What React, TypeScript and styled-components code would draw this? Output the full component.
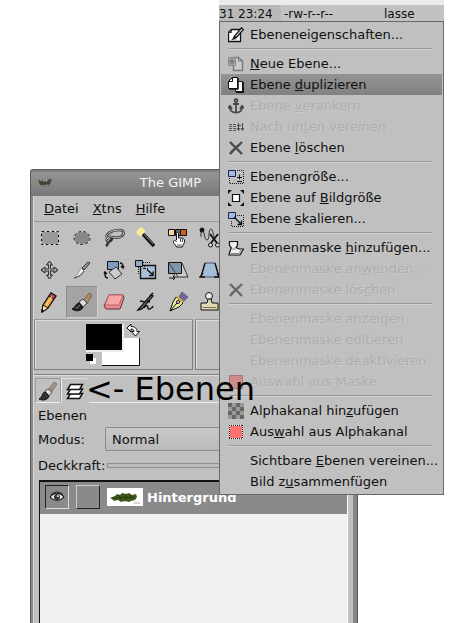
import React from "react";
import styled, { createGlobalStyle, css } from "styled-components";

const Global = createGlobalStyle`
  * { box-sizing: border-box; }
  html, body { margin: 0; background: #fff; }
  body, button, select, input {
    font-family: "DejaVu Sans", "Bitstream Vera Sans", sans-serif;
    font-size: 13px;
    color: #101010;
  }
  button { padding: 0; border: 0; background: none; text-align: left; }
  svg { display: block; flex: none; }
`;

const Desktop = styled.main`
  position: relative;
  display: flex;
  min-height: 100vh;
  overflow: hidden;
  padding: 169px 107px 0 30px;
`;

/* ---------- toolbox window ---------- */

const Window = styled.section`
  flex: 1;
  min-width: 0;
  display: flex;
  flex-direction: column;
  background: #c0c0c0;
  border: solid #5a5a5a;
  border-width: 1px 1px 0;
  border-radius: 3px 3px 0 0;
  box-shadow: inset 3px 0 #8a8a8a, inset -4px 0 #858585;
`;

const TitleBar = styled.header`
  display: flex;
  align-items: center;
  height: 26px;
  padding: 0 68px 0 7px;
  background: linear-gradient(#777 0, #949494 3px, #858585 60%, #777);
  color: #f4f4f4;
`;

const Title = styled.h1`
  flex: 1;
  margin: 0;
  text-align: center;
  font-size: 13px;
  font-weight: normal;
  line-height: 28px;
`;

const WindowBody = styled.div`
  flex: 1;
  display: flex;
  flex-direction: column;
  margin: 0 4px 0 2px;
  border-left: 1px solid #d8d8d8;
`;

const MenuBar = styled.nav`
  display: flex;
  gap: 14px;
  height: 26px;
  padding-left: 10px;
  align-items: center;
  border-bottom: 1px solid #999;
`;

const MenuTitle = styled.button`
  line-height: 24px;
`;

const ToolSet = styled.div`
  display: grid;
  grid-template-columns: repeat(6, 32px);
  grid-auto-rows: 32px;
  padding-bottom: 1px;
`;

const ToolButton = styled.button<{ $active?: boolean }>`
  display: grid;
  place-items: center;
  height: 32px;
  border: 1px solid transparent;
  ${(p) =>
    p.$active &&
    css`
      border-color: #8a8a8a #d0d0d0 #d0d0d0 #8a8a8a;
      background: #a4a4a4;
    `}
`;

const ColorRow = styled.div`
  display: grid;
  grid-template-columns: 1fr 1fr;
  height: 51px;
  gap: 2px;
`;

const ColorFrame = styled.div`
  display: grid;
  place-items: center;
  border: 1px solid #808080;
  border-top-color: #999;
  box-shadow: inset 1px 1px #dcdcdc;
`;

const Dock = styled.section`
  flex: 1;
  display: flex;
  flex-direction: column;
  margin-top: 4px;
  border-top: 1px solid #808080;
  box-shadow: inset 0 1px #dcdcdc;
`;

const Tabs = styled.div`
  display: flex;
  height: 28px;
  padding: 3px 0 0 1px;
  &::after {
    content: "";
    flex: 1;
    border-bottom: 1px solid #eee;
  }
`;

const Tab = styled.button<{ $active?: boolean }>`
  display: grid;
  place-items: center;
  width: 26px;
  border: 1px solid #999;
  border-bottom-color: #eee;
  ${(p) =>
    p.$active &&
    css`
      width: 28px;
      border-color: #ddd transparent transparent #eee;
    `}
`;

const Panel = styled.div`
  flex: 1;
  display: flex;
  flex-direction: column;
  padding: 2px 0 0 4px;
`;

const PanelTitle = styled.h2`
  margin: 0;
  font-size: 13px;
  font-weight: normal;
  line-height: 22px;
`;

const Field = styled.div`
  display: flex;
  align-items: center;
  height: 24px;
  margin-right: 6px;
`;

const ModeLabel = styled.label`
  width: 67px;
`;

const OpacityField = styled(Field)`
  height: 29px;
`;

const OpacityLabel = styled.label`
  width: 69px;
`;

const Select = styled.select`
  flex: 1;
  appearance: none;
  height: 24px;
  padding: 0 6px;
  border: 1px solid #8c8c8c;
  border-radius: 1px;
  background: linear-gradient(#c8c8c8, #bababa);
`;

const Range = styled.input`
  flex: 1;
  min-width: 0;
  appearance: none;
  height: 5px;
  margin: 0;
  border: 1px solid #909090;
  background: #bcbcbc;
  &::-webkit-slider-thumb {
    appearance: none;
    width: 20px;
    height: 11px;
    border: 1px solid #808080;
    background: #c8c8c8;
  }
`;

const LayerList = styled.ul`
  flex: 1;
  margin: 0 5px 0 1px;
  padding: 0;
  list-style: none;
  background: #f0f0f0;
  border: solid #111;
  border-width: 2px 0 0 1px;
  border-right: 1px solid #fff;
`;

const LayerRow = styled.li`
  display: flex;
  align-items: center;
  height: 32px;
  padding: 0 0 2px 5px;
  background: #8a8a8a;
  color: #fff;
  font-weight: bold;
`;

const LayerToggle = styled.button<{ $sunken?: boolean }>`
  display: grid;
  place-items: center;
  width: 24px;
  height: 24px;
  margin-right: 7px;
  border: 1px solid;
  border-color: ${(p) =>
    p.$sunken ? "#222 #ddd #ddd #222" : "#ccc #222 #222 #ccc"};
`;

const Thumb = styled.span`
  margin-right: 4px;
  background: #fff;
`;

/* ---------- file listing and popup menu ---------- */

const Popup = styled.div`
  position: absolute;
  top: 0;
  left: 219px;
  width: max-content;
`;

const FileStrip = styled.div`
  display: flex;
  height: 21px;
  border-top: 5px solid #ebebeb;
  background: #c2c2c2;
  font-size: 12px;
  line-height: 19px;
  white-space: pre;
  overflow: hidden;
`;

const FileTime = styled.span`
  width: 62px;
  background: #b9b9b9;
`;

const FileMode = styled.span`
  width: 103px;
  padding-left: 3px;
`;

const Menu = styled.div`
  padding: 2px 1px;
  border: 1px solid #686868;
  background: #c0c0c0;
`;

const MenuItem = styled.button<{ $selected?: boolean }>`
  display: grid;
  grid-template-columns: 22px auto;
  align-items: center;
  width: 100%;
  height: 21px;
  padding: 0 4px 0 7px;
  white-space: nowrap;
  ${(p) =>
    p.$selected &&
    css`
      background: linear-gradient(#939393, #818181);
    `}
  &:disabled {
    color: #aeaeae;
    text-shadow: 1px 1px #c8c8c8;
  }
  &:disabled svg {
    opacity: 0.75;
  }
`;

const Label = styled.span`
  grid-column: 2;
  line-height: 19px;
`;

const Separator = styled.hr`
  height: 2px;
  margin: 3px 10px 3px 8px;
  border: 0;
  border-top: 1px solid #989898;
  border-bottom: 1px solid #d2d2d2;
`;

const Note = styled.p`
  position: absolute;
  top: 370px;
  left: 86px;
  margin: 0;
  font-size: 32px;
  line-height: 38px;
  color: #000;
  white-space: nowrap;
`;

/* ---------- drawings ---------- */

const I = ({ s = 16, children }: { s?: number; children: React.ReactNode }) => (
  <svg width={s} height={s} viewBox={`0 0 ${s} ${s}`} fill="none" stroke="#111" aria-hidden="true">
    {children}
  </svg>
);

const icons: Record<string, React.ReactNode> = {
  edit: (
    <I>
      <path d="M3.500 2.500h9v12h-12v-9z" fill="#fff" strokeWidth="1.300" />
      <path d="M.5 5.500h3v-3" stroke="#333" />
      <path d="M3 12.500h6" stroke="#bbb" />
      <path d="M6 10L13.500.8l2 1.700L8.500 10.500 5 12z" fill="#ddd" strokeWidth="1.200" />
      <path d="M5 12l2-3 2 1.500z" fill="#111" stroke="none" />
    </I>
  ),
  fresh: (
    <I>
      <path d="M5.500 1.500h5l4 3.500v9.500h-9z" fill="#cacaca" stroke="#777" strokeWidth="1.400" />
      <path d="M10.500 1.500V5h4" stroke="#777" />
      <path d="M.5 1.500h7v8h-7z" fill="#b0b0b0" stroke="#888" />
      <path d="M4 2v7M1 5.500h6M2 3l4 5M6 3L2 8" stroke="#777" />
    </I>
  ),
  copy: (
    <I>
      <path d="M7.500 4.500h7v10h-7z" fill="#fff" />
      <path d="M15.200 5v10.200H8" strokeWidth="1.500" />
      <path d="M4.500.5h5v11h-9v-7z" fill="#fff" />
      <path d="M4.500.5v4h-4" />
      <path d="M10 1v11H1" strokeWidth="1.500" />
    </I>
  ),
  anchor: (
    <I>
      <circle cx="8" cy="2.500" r="1.500" strokeWidth="1.500" />
      <path d="M8 4v10M5 6h6M1.500 9c.5 4 3.500 5.500 6.500 5.500S14 13 14.500 9M0 10l2-2 2 3M12 11l2-3 2 2" stroke="#222" strokeWidth="1.800" />
    </I>
  ),
  merge: (
    <I>
      <path d="M1 5.500h7M1 7.500h7M1 9.500h7M1 11.500h7" stroke="#333" strokeDasharray="3 1" />
      <path d="M10.500 4v7M9 9l1.500 2.500L12 9M14.500 4v7M13 9l1.500 2.500L16 9M9 6.500h4" stroke="#222" />
    </I>
  ),
  cross: (
    <I>
      <path d="M2 2l12 12M14 2C10 6 5 10 2 14" stroke="#4c4c4c" strokeWidth="2.400" />
    </I>
  ),
  size: (
    <I>
      <path d="M9 1.500h6.500v13H1.500V8" strokeDasharray="1 1" />
      <path d="M.5 1.500h7v6h-7z" fill="#a9b8df" stroke="#182450" />
      <path d="M11.500 5.500v5M9 8.500h5M9 12.500h5" />
    </I>
  ),
  fit: (
    <I>
      <path d="M4.500 4.500h7v7h-7z" fill="#fff" strokeWidth="1.200" />
      <path d="M0 0h4L0 4zM16 0h-4l4 4zM16 16h-4l4-4zM0 16h4l-4-4z" fill="#111" stroke="none" />
    </I>
  ),
  scale: (
    <I>
      <path d="M9 4.500h6.500v11h-12V9" strokeDasharray="1 1" />
      <path d="M.5 1.500h7v6h-7z" fill="#a9b8df" stroke="#182450" />
      <path d="M6 6l7 7M13.500 9.500v4h-4" strokeWidth="1.400" />
    </I>
  ),
  mask: (
    <I>
      <path d="M1.500 1.500h8v4l-1.500 2 3 1.500h4.500l-3.500 6H1l1.500-5.500 1-1.500-2-2.500z" fill="#eee" strokeWidth="1.200" />
      <path d="M3 13.500h8l2.500-4M4 9h4" stroke="#888" />
    </I>
  ),
  maskSel: (
    <I>
      <path d="M1.500 1.500h13v13h-13z" fill="#d77" stroke="#822" strokeDasharray="1 1" />
      <path d="M2 3.500h12M2 6.500h12M2 9.500h12M2 12.500h12" stroke="#a88" strokeDasharray="1 1" />
    </I>
  ),
  checker: (
    <I>
      <path d="M0 0h16v16H0z" fill="#999" stroke="none" />
      <path d="M0 0h4v4H0zM8 0h4v4H8zM4 4h4v4H4zM12 4h4v4h-4zM0 8h4v4H0zM8 8h4v4H8zM4 12h4v4H4zM12 12h4v4h-4z" fill="#666" stroke="none" />
    </I>
  ),
  alphaSel: (
    <I>
      <path d="M1.500 1.500h13v13h-13z" fill="#ff7070" stroke="#fff" />
      <path d="M1 1.500h14M1 14.500h14M1.500 1v14M14.500 1v14" strokeDasharray="1 1" />
    </I>
  ),
};

const tools: [string, React.ReactNode][] = [
  ["Rechteckige Auswahl", <I s={22}>
    <path d="M2.500 4.500h17v13h-17z" fill="#999" stroke="#fff" />
    <path d="M2.500 4.500h17v13h-17z" strokeDasharray="3 2" />
  </I>],
  ["Elliptische Auswahl", <I s={22}>
    <ellipse cx="11" cy="11" rx="8" ry="6.500" fill="#888" stroke="#ddd" />
    <ellipse cx="11" cy="11" rx="8" ry="6.500" strokeDasharray="3 2" />
  </I>],
  ["Freie Auswahl", <I s={22}>
    <path d="M5 12C0 7 10 3 16 3s6 5 1 7-8-1-11 0-3 4 0 4 4-3 1-4M7 14c-3 2-2 4-4 5" strokeWidth="2.600" stroke="#333" />
    <path d="M5 12C0 7 10 3 16 3s6 5 1 7-8-1-11 0-3 4 0 4" stroke="#ccc" />
  </I>],
  ["Zauberstab", <I s={22}>
    <circle cx="6" cy="5" r="4" fill="#f8e9a0" stroke="none" />
    <path d="M6 0v10M1 5h10M3 2l6 6M9 2L3 8" stroke="#ffe98a" />
    <path d="M8 7l11 12" strokeWidth="3.500" />
    <path d="M8 6l10 11" stroke="#888" />
  </I>],
  ["Nach Farbe auswählen", <I s={22}>
    <path d="M1.500 2.500h6v6h-6z" fill="#f7d79b" />
    <path d="M8.500 2.500h5v6h-5z" fill="#666" />
    <path d="M13.500 2.500h6v6h-6z" fill="#cc5b20" />
    <path d="M9.500 13V6.500c0-1.500 2-1.500 2 0V11c4 0 6 0 6 3s-2 4-2 6h-6c-1-3-4-4-3-6 1-1 3 0 3 1" fill="#fff" />
    <path d="M13.500 12v3M15.500 12v3M10 18h5" stroke="#555" />
  </I>],
  ["Magnetische Schere", <I s={22}>
    <path d="M2 3c4 0 3 10 6 10s1-11 4-11c2 0 2 5 3 8M2 3v7" stroke="#333" />
    <circle cx="3" cy="3" r="2" fill="#111" />
    <path d="M11 7l7 9M19 7l-7 9" strokeWidth="1.800" />
    <circle cx="11.500" cy="18" r="2" fill="#ddd" /><circle cx="18.500" cy="18" r="2" fill="#ddd" />
  </I>],
  ["Verschieben", <I s={22}>
    <path d="M10.500 4v14M3 11h15" strokeWidth="3" stroke="#333" />
    <path d="M7.500 6l3-4 3 4zM7.500 16l3 4 3-4zM6 8l-4 3 4 3zM15 8l4 3-4 3z" fill="#aaa" stroke="#222" />
    <path d="M10.500 4v14M4 11h13" stroke="#bbb" />
  </I>],
  ["Skalpell", <I s={22}>
    <path d="M11 9l6-6 2 1-6 7z" fill="#999" stroke="#333" />
    <path d="M10 9l3 3c-2 4-6 6-10 7 3-2 5-6 7-10z" fill="#f5f5f5" stroke="#999" />
    <path d="M13 12c-2 4-6 6-10 7" stroke="#444" />
  </I>],
  ["Drehen", <I s={22}>
    <path d="M4.500 2.500h11v8h-11z" fill="#7f9cbd" />
    <path d="M6 13l7-5 6 7-7 5z" fill="#c9cdd0" stroke="#333" />
    <path d="M17 4c3 0 3 2 3 4M18 7l2 2 1-2M5 19c-3 0-3-2-3-5M1 15l1-2 2 2" strokeWidth="1.400" />
  </I>],
  ["Skalieren", <I s={22}>
    <path d="M5.500 6.500h15v13h-15z" fill="#a9bfd5" strokeWidth="1.300" />
    <path d="M8 3.500h8M3.500 8v8M8 9.500h6M9.500 7v4" strokeDasharray="1 1" />
    <path d="M.5 1.500h7v6h-7z" fill="#8fabc9" />
    <path d="M12 10.500l6 5.500M18 12.500v4h-4" strokeWidth="1.400" />
  </I>],
  ["Scheren", <I s={22}>
    <path d="M8 4h7l6 14H7z" fill="#ccc" stroke="#333" />
    <path d="M1.500 3.500h13v11h-13z" fill="#8096ae" />
    <path d="M2 4l9 14" stroke="#444" />
    <path d="M2 19h6M6 17l2 2-2 2" />
  </I>],
  ["Perspektive", <I s={22}>
    <path d="M6 4h10l4 14H2z" fill="#a5bed7" stroke="#3d5268" />
    <path d="M6 4L2 18M16 4l4 14M4 14l-3 4h5M18 14l2 4h-5" strokeWidth="1.300" />
  </I>],
  ["Stift", <I s={22}>
    <path d="M4 14L12 2l5 3-8 12-6 4z" fill="#efa548" strokeWidth="1.300" />
    <path d="M12 2l5 3-2 3-5-3z" fill="#c4464d" />
    <path d="M4 14l5 3-6 4z" fill="#f7e6b8" />
    <path d="M7 14l6-9" stroke="#ffe58d" />
    <path d="M3 18v3l2-1" fill="#111" />
  </I>],
  ["Pinsel", <I s={22}>
    <path d="M12 10l6-8 3 2-5 9z" fill="#a68b65" stroke="#80694a" />
    <path d="M8 11l4-3 4 4-4 4z" fill="#ddd" stroke="#444" />
    <path d="M8 12c-3 0-3 4-7 6 4 3 10 2 11-2z" fill="#222" />
    <path d="M5 17c2 0 3-2 4-3" stroke="#999" />
  </I>],
  ["Radierer", <I s={22}>
    <path d="M6 4h14l1 3-4 11H3l-2-3z" fill="#e98790" stroke="#633" />
    <path d="M6 4h14l-4 10H2z" fill="#f7a7aa" stroke="#b66" />
  </I>],
  ["Sprühpistole", <I s={22}>
    <path d="M3 19L16 4l2 1L7 18z" fill="#888" strokeWidth="1.300" />
    <path d="M18 2l-3 3M5 10l5 1M9 17c2-4 4-2 4 0s4 1 5-2M12 10l3 1" strokeWidth="1.500" />
  </I>],
  ["Tinte", <I s={22}>
    <path d="M12 6l3-5 6 5-5 5z" fill="#75659b" stroke="#6a5d86" />
    <path d="M9 6l7 6-4 4-9 4 3-9z" fill="#efeaa0" />
    <path d="M3 20l7-8" /><circle cx="11" cy="11" r="1.500" fill="#fff" />
    <path d="M10 6l6 5" stroke="#d9b93a" strokeWidth="2" />
  </I>],
  ["Klonen", <I s={22}>
    <circle cx="10" cy="5" r="3.500" fill="#eee" />
    <path d="M9 8h3l1 4h6v7H2v-7h6z" fill="#ddd8ad" />
    <path d="M4 16.500h13" stroke="#77745b" />
  </I>],
];

const Brush = () => (
  <I s={20}>
    <path d="M10 9l6-8 3 2-6 9z" fill="#a9957a" stroke="#777" />
    <path d="M7 10l3-2 4 3-3 4z" fill="#ddd" stroke="#555" />
    <path d="M7 11c-3 0-2 5-6 7 4 2 9 1 10-3z" fill="#333" />
  </I>
);

const Layers = () => (
  <I s={20}>
    <path d="M5.500 12.500h12l-3 5h-12z" fill="#fff" strokeWidth="1.500" />
    <path d="M5.500 8h12l-3 5h-12z" fill="#fff" strokeWidth="1.500" />
    <path d="M5.500 3.500h12l-3 5h-12z" fill="#fff" strokeWidth="1.500" />
  </I>
);

const Swatches = () => (
  <svg width="54" height="42" viewBox="0 0 54 42" aria-hidden="true">
    <path d="M16 14h38v28H16z" fill="#fff" />
    <path d="M53.500 14v27.500H16" fill="none" stroke="#111" />
    <path d="M0 0h38v28H0z" fill="#eee" />
    <path d="M0 0h36v26H0z" />
    <path d="M4 34h6v6H4z" fill="#fff" />
    <path d="M0 30h7v7H0z" />
    <path d="M41 4l4-4v2.500c4 0 6 2 6 5h2.500l-4 4.500-4-4.500H48c0-2-1-2.500-3-2.500v3z" fill="#fff" stroke="#111" />
  </svg>
);

const Wilber = () => (
  <I s={14}>
    <path d="M1 4l2 2 2-2 2 2c2 0 4-3 6-3 0 4-2 7-6 7-4 0-6-2-6-6z" fill="#494239" stroke="#4d473f" />
    <path d="M5 5h1M8 5h1" stroke="#ddd" />
    <path d="M4 10l6-1" stroke="#a5967f" />
  </I>
);

const Eye = () => (
  <svg width="16" height="12" viewBox="0 0 18 14" aria-hidden="true">
    <path d="M1 7c4-6 12-6 16 0-4 5-12 5-16 0z" fill="#eee" stroke="#111" strokeWidth="1.300" />
    <circle cx="9" cy="7" r="3.500" fill="#333" />
    <circle cx="10" cy="6" r="1.200" fill="#ddd" />
    <path d="M2 4c4-4 10-4 14 0" fill="none" stroke="#333" />
  </svg>
);

const Leaf = () => (
  <svg width="36" height="18" viewBox="0 0 36 18" aria-hidden="true">
    <path d="M3 10l5-2 2-2 3 1 2-2 4 1 3-1 3 2 4-1 1 3-2 3-4 1-2 1-4-1-4 1-3-2-4 1-2-2z" fill="#405a1c" />
    <path d="M5 10l22-1M12 7l2 5M18 6l1 6M23 7l2 4" stroke="#263b10" />
    <path d="M27 15h6" stroke="#aaa" />
  </svg>
);

/* "_" marks the mnemonic letter that follows it */
const mnemonic = (text: string) => {
  const [head, tail] = text.split("_");
  if (tail === undefined) return head;
  return <>{head}<u>{tail[0]}</u>{tail.slice(1)}</>;
};

type Entry = { text: string; icon?: string; disabled?: boolean; selected?: boolean };

const groups: Entry[][] = [
  [{ text: "Ebeneneigenschaften...", icon: "edit" }],
  [
    { text: "_Neue Ebene...", icon: "fresh" },
    { text: "Ebene _duplizieren", icon: "copy", selected: true },
    { text: "Ebene _verankern", icon: "anchor", disabled: true },
    { text: "Nach un_ten vereinen", icon: "merge", disabled: true },
    { text: "Ebene _löschen", icon: "cross" },
  ],
  [
    { text: "Ebenengröße...", icon: "size" },
    { text: "Ebene auf _Bildgröße", icon: "fit" },
    { text: "Ebene _skalieren...", icon: "scale" },
  ],
  [
    { text: "Ebenenmaske _hinzufügen...", icon: "mask" },
    { text: "Ebenenmaske an_wenden...", disabled: true },
    { text: "Ebenenmaske lös_chen", icon: "cross", disabled: true },
  ],
  [
    { text: "Ebenenmaske anzeigen", disabled: true },
    { text: "Ebenenmaske editieren", disabled: true },
    { text: "Ebenenmaske deaktivieren", disabled: true },
    { text: "_Auswahl aus Maske", icon: "maskSel", disabled: true },
  ],
  [
    { text: "Alphakanal hin_zufügen", icon: "checker" },
    { text: "Aus_wahl aus Alphakanal", icon: "alphaSel" },
  ],
  [{ text: "Sichtbare _Ebenen vereinen..." }, { text: "Bild z_usammenfügen" }],
];

export default function App() {
  return (
    <Desktop>
      <Global />
      <Window>
        <TitleBar>
          <Wilber />
          <Title>The GIMP</Title>
        </TitleBar>
        <WindowBody>
          <MenuBar>
            {["_Datei", "_Xtns", "_Hilfe"].map((t) => (
              <MenuTitle key={t}>{mnemonic(t)}</MenuTitle>
            ))}
          </MenuBar>
          <ToolSet role="toolbar">
            {tools.map(([name, icon]) => (
              <ToolButton key={name} aria-label={name} $active={name === "Pinsel"}>
                {icon}
              </ToolButton>
            ))}
          </ToolSet>
          <ColorRow>
            <ColorFrame><Swatches /></ColorFrame>
            <ColorFrame />
          </ColorRow>
          <Dock>
            <Tabs role="tablist">
              <Tab role="tab" aria-label="Werkzeugeinstellungen"><Brush /></Tab>
              <Tab role="tab" aria-label="Ebenen" aria-selected $active><Layers /></Tab>
            </Tabs>
            <Panel>
              <PanelTitle>Ebenen</PanelTitle>
              <Field>
                <ModeLabel htmlFor="mode">Modus:</ModeLabel>
                <Select id="mode"><option>Normal</option></Select>
              </Field>
              <OpacityField>
                <OpacityLabel htmlFor="opacity">Deckkraft:</OpacityLabel>
                <Range id="opacity" type="range" defaultValue={100} />
              </OpacityField>
              <LayerList>
                <LayerRow>
                  <LayerToggle $sunken aria-label="Sichtbarkeit"><Eye /></LayerToggle>
                  <LayerToggle aria-label="Verkettung" />
                  <Thumb><Leaf /></Thumb>
                  Hintergrund
                </LayerRow>
              </LayerList>
            </Panel>
          </Dock>
        </WindowBody>
      </Window>

      <Popup>
        <FileStrip>
          <FileTime>31 23:24</FileTime>
          <FileMode>-rw-r--r--</FileMode>
          <span>lasse</span>
        </FileStrip>
        <Menu role="menu">
          {groups.map((group, g) => (
            <React.Fragment key={g}>
              {g > 0 && <Separator />}
              {group.map((e) => (
                <MenuItem key={e.text} role="menuitem" disabled={e.disabled} $selected={e.selected}>
                  {e.icon && icons[e.icon]}
                  <Label>{mnemonic(e.text)}</Label>
                </MenuItem>
              ))}
            </React.Fragment>
          ))}
        </Menu>
      </Popup>

      <Note>&lt;- Ebenen</Note>
    </Desktop>
  );
}
